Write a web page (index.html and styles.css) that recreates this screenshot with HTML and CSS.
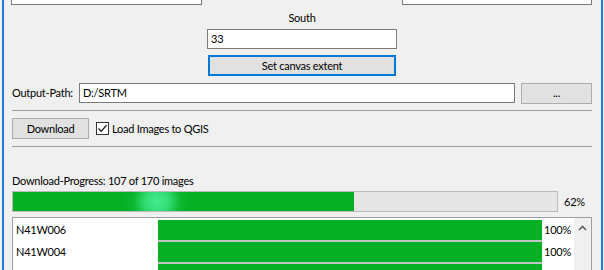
FILE: index.html
```html
<!DOCTYPE html>
<html>
<head>
<meta charset="utf-8">
<link rel="stylesheet" href="styles.css">
</head>
<body>
<div class="window">
  <div class="top-row">
    <div class="field top-field top-left"></div>
    <div class="field top-field top-right"></div>
  </div>
  <div class="south-label">South</div>
  <div class="field south-field">33</div>
  <div class="btn extent-btn">Set canvas extent</div>
  <div class="output-row">
    <span class="output-label">Output-Path:</span>
    <div class="field output-field">D:/SRTM</div>
    <div class="btn browse-btn">...</div>
  </div>
  <div class="separator sep1"></div>
  <div class="download-row">
    <div class="btn download-btn">Download</div>
    <label class="check">
      <span class="box"><svg width="11" height="11" viewBox="0 0 11 11"><path d="M1.5 5.5 L4.2 8.3 L9.6 2.2" fill="none" stroke="#222" stroke-width="1.3"/></svg></span>
      <span>Load Images to QGIS</span>
    </label>
  </div>
  <div class="separator sep2"></div>
  <div class="progress-label">Download-Progress: 107 of 170 images</div>
  <div class="progress-row">
    <div class="progress main-progress"><div class="fill" style="width:62.7%"></div></div>
    <span class="pct">62%</span>
  </div>
  <div class="list">
    <div class="rows">
      <div class="row"><span class="name">N41W006</span><div class="cell-bar"><div class="cell-fill"></div></div><span class="row-pct">100%</span></div>
      <div class="row"><span class="name">N41W004</span><div class="cell-bar"><div class="cell-fill"></div></div><span class="row-pct">100%</span></div>
      <div class="row"><span class="name"></span><div class="cell-bar"><div class="cell-fill"></div></div><span class="row-pct"></span></div>
    </div>
    <div class="scrollbar">
      <svg class="arrow" width="9" height="6" viewBox="0 0 9 6"><path d="M1 5 L4.5 1.5 L8 5" fill="none" stroke="#606060" stroke-width="1.6"/></svg>
    </div>
  </div>
</div>
</body>
</html>
```

FILE: styles.css
```css
html, body {
  margin: 0;
  padding: 0;
  background: #f0f0f0;
  overflow: hidden;
}
body {
  width: 604px;
  height: 270px;
  font-family: "Lato", "Noto Sans", sans-serif;
  font-size: 11px;
  letter-spacing: -0.25px;
  color: #000;
}
.window {
  margin-left: 2px;
  width: 601px;
  height: 270px;
  border-left: 2px solid #1a7fd4;
  border-right: 2px solid #1a7fd4;
  padding: 0 9px 0 8px;
  box-sizing: border-box;
  display: flex;
  flex-direction: column;
  overflow: hidden;
}
.field {
  background: #fff;
  border: 1px solid #7a7a7a;
  box-sizing: border-box;
  height: 20px;
  line-height: 18px;
  padding-left: 3px;
  white-space: nowrap;
}
.btn {
  background: #e1e1e1;
  border: 1px solid #adadad;
  box-sizing: border-box;
  height: 21px;
  line-height: 19px;
  text-align: center;
  white-space: nowrap;
  flex-shrink: 0;
}
.top-row {
  display: flex;
  justify-content: space-between;
  margin-top: -16px;
  margin-left: -1px;
}
.top-field {
  height: 21px;
}
.top-left { width: 191px; }
.top-right { width: 190px; }
.south-label {
  margin-top: 5px;
  height: 15px;
  line-height: 15px;
  text-align: center;
}
.south-field {
  margin-top: 4px;
  width: 190px;
  align-self: center;
}
.extent-btn {
  margin-top: 6px;
  width: 188px;
  align-self: center;
  border: 2px solid #0078d7;
  line-height: 17px;
}
.output-row {
  margin-top: 7px;
  display: flex;
  align-items: flex-start;
  height: 21px;
}
.output-label {
  width: 67px;
  flex-shrink: 0;
  white-space: nowrap;
  line-height: 20px;
}
.output-field {
  width: 436px;
  flex-shrink: 0;
}
.browse-btn {
  margin-left: 6px;
  width: 71px;
  line-height: 17px;
}
.separator {
  height: 1px;
  border-top: 1px solid #a0a0a0;
  background: #fff;
  width: 580px;
}
.sep1 { margin-top: 6px; }
.download-row {
  margin-top: 7px;
  display: flex;
  align-items: center;
  height: 21px;
}
.download-btn {
  width: 77px;
}
.check {
  display: flex;
  align-items: center;
  margin-left: 7px;
  white-space: nowrap;
}
.box {
  width: 13px;
  height: 13px;
  box-sizing: border-box;
  border: 1px solid #333;
  background: #fff;
  display: flex;
  align-items: center;
  justify-content: center;
  margin-right: 3px;
}
.sep2 { margin-top: 7px; }
.progress-label {
  margin-top: 26px;
  height: 15px;
  line-height: 15px;
  white-space: nowrap;
}
.progress-row {
  margin-top: 3px;
  display: flex;
  align-items: center;
  height: 21px;
}
.progress {
  background: #e6e6e6;
  border: 1px solid #bcbcbc;
  box-sizing: border-box;
}
.main-progress {
  width: 546px;
  height: 21px;
  flex-shrink: 0;
}
.fill {
  height: 100%;
  background:
    radial-gradient(ellipse 34px 32px at 144px 50%, rgba(70, 235, 145, 1) 0%, rgba(55, 225, 125, 0.9) 35%, rgba(20, 190, 60, 0.45) 70%, rgba(6, 176, 37, 0) 100%),
    #06b025;
}
.pct {
  margin-left: 6px;
}
.list {
  margin-top: 5px;
  width: 580px;
  flex: 1;
  border: 1px solid #a0a0a0;
  border-bottom: none;
  background: #fff;
  box-sizing: border-box;
  display: flex;
}
.rows {
  flex: 1;
  padding-top: 1px;
}
.row {
  display: flex;
  align-items: stretch;
  height: 22px;
}
.name {
  width: 145px;
  flex-shrink: 0;
  padding-left: 3px;
  box-sizing: border-box;
  line-height: 22px;
}
.cell-bar {
  width: 384px;
  flex-shrink: 0;
  border-top: 1px solid #c4c4c4;
  border-bottom: 1px solid #c4c4c4;
  box-sizing: border-box;
  background: #e6e6e6;
}
.row:first-child .cell-bar {
  border-top: none;
  margin-top: 1px;
}
.cell-fill {
  height: 100%;
  background: #06b025;
}
.row-pct {
  margin-left: 2px;
  line-height: 22px;
}
.scrollbar {
  width: 17px;
  background: #f0f0f0;
  display: flex;
  justify-content: center;
  align-items: flex-start;
}
.arrow {
  margin-top: 7px;
}
```
